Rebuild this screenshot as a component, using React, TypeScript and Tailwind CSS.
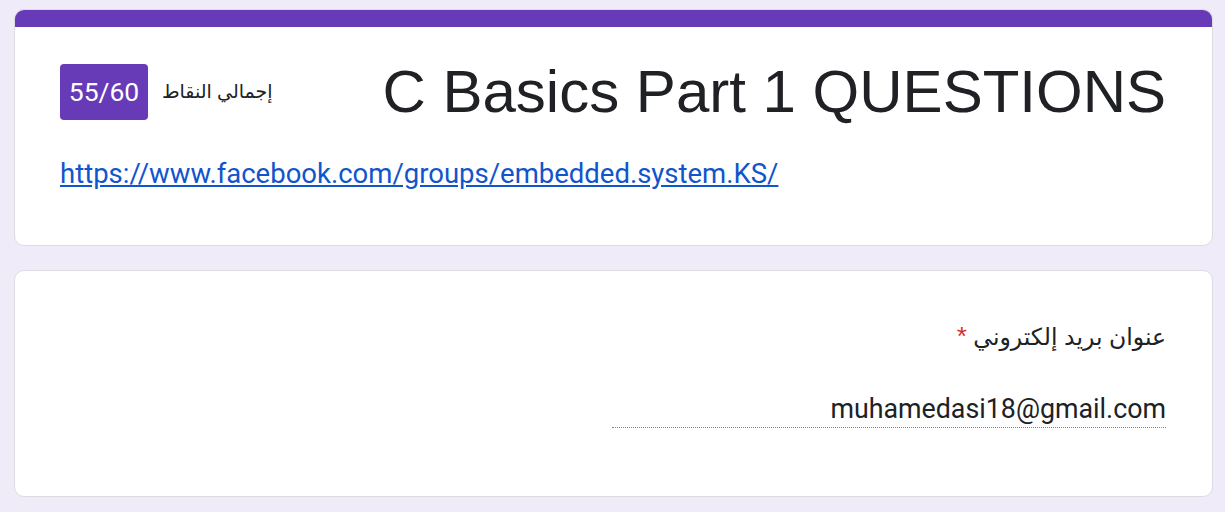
import React from "react";

export default function App() {
  return (
    <div dir="rtl" className="w-[1225px] h-[512px] bg-[#f0ebf8] pt-[9px] overflow-hidden" style={{ fontFamily: "Roboto, 'Liberation Sans', sans-serif" }}>
      <div className="ml-[14px] mr-[12px] flex flex-col gap-[24px]">
        <div className="rounded-[10px] bg-white border border-[#dadce0] overflow-hidden h-[237px]">
          <div className="h-[18px] bg-[#673ab7] -mx-px -mt-px" />
          <div className="pl-[45px] pr-[46px] pt-[37px]">
            <div className="flex items-center justify-between">
              <h1 className="text-[60px] leading-[56px] text-[#202124]" dir="ltr" style={{ fontFamily: "'Liberation Sans', Arial, sans-serif" }}>
                C Basics Part 1 QUESTIONS
              </h1>
              <div className="flex items-center gap-[14px]">
                <span className="text-[19px] text-[#202124]" style={{ fontFamily: "'Liberation Sans', 'DejaVu Sans', sans-serif" }}>إجمالي النقاط</span>
                <span dir="ltr" className="h-[56px] w-[88px] rounded-[4px] bg-[#673ab7] text-white text-[26.5px] flex items-center justify-center">55/60</span>
              </div>
            </div>
            <div dir="ltr" className="mt-[36px] text-left leading-[36px]">
              <a href="#" className="text-[27.5px] text-[#1155cc] underline">https://www.facebook.com/groups/embedded.system.KS/</a>
            </div>
          </div>
        </div>
        <div className="rounded-[10px] bg-white border border-[#dadce0] h-[227px] px-[46px] pt-[49px]">
          <div className="text-[23.5px] text-[#202124] leading-[32px]" style={{ fontFamily: "'Liberation Sans', 'DejaVu Sans', sans-serif" }}>
            عنوان بريد إلكتروني <span className="text-[#d93025] text-[26px]">*</span>
          </div>
          <div className="mt-[40px] w-[554px] border-b border-dotted border-[#80868b] pb-[2px]">
            <div dir="ltr" className="text-right text-[26.8px] leading-[32px] text-[#202124]">muhamedasi18@gmail.com</div>
          </div>
        </div>
      </div>
    </div>
  );
}
